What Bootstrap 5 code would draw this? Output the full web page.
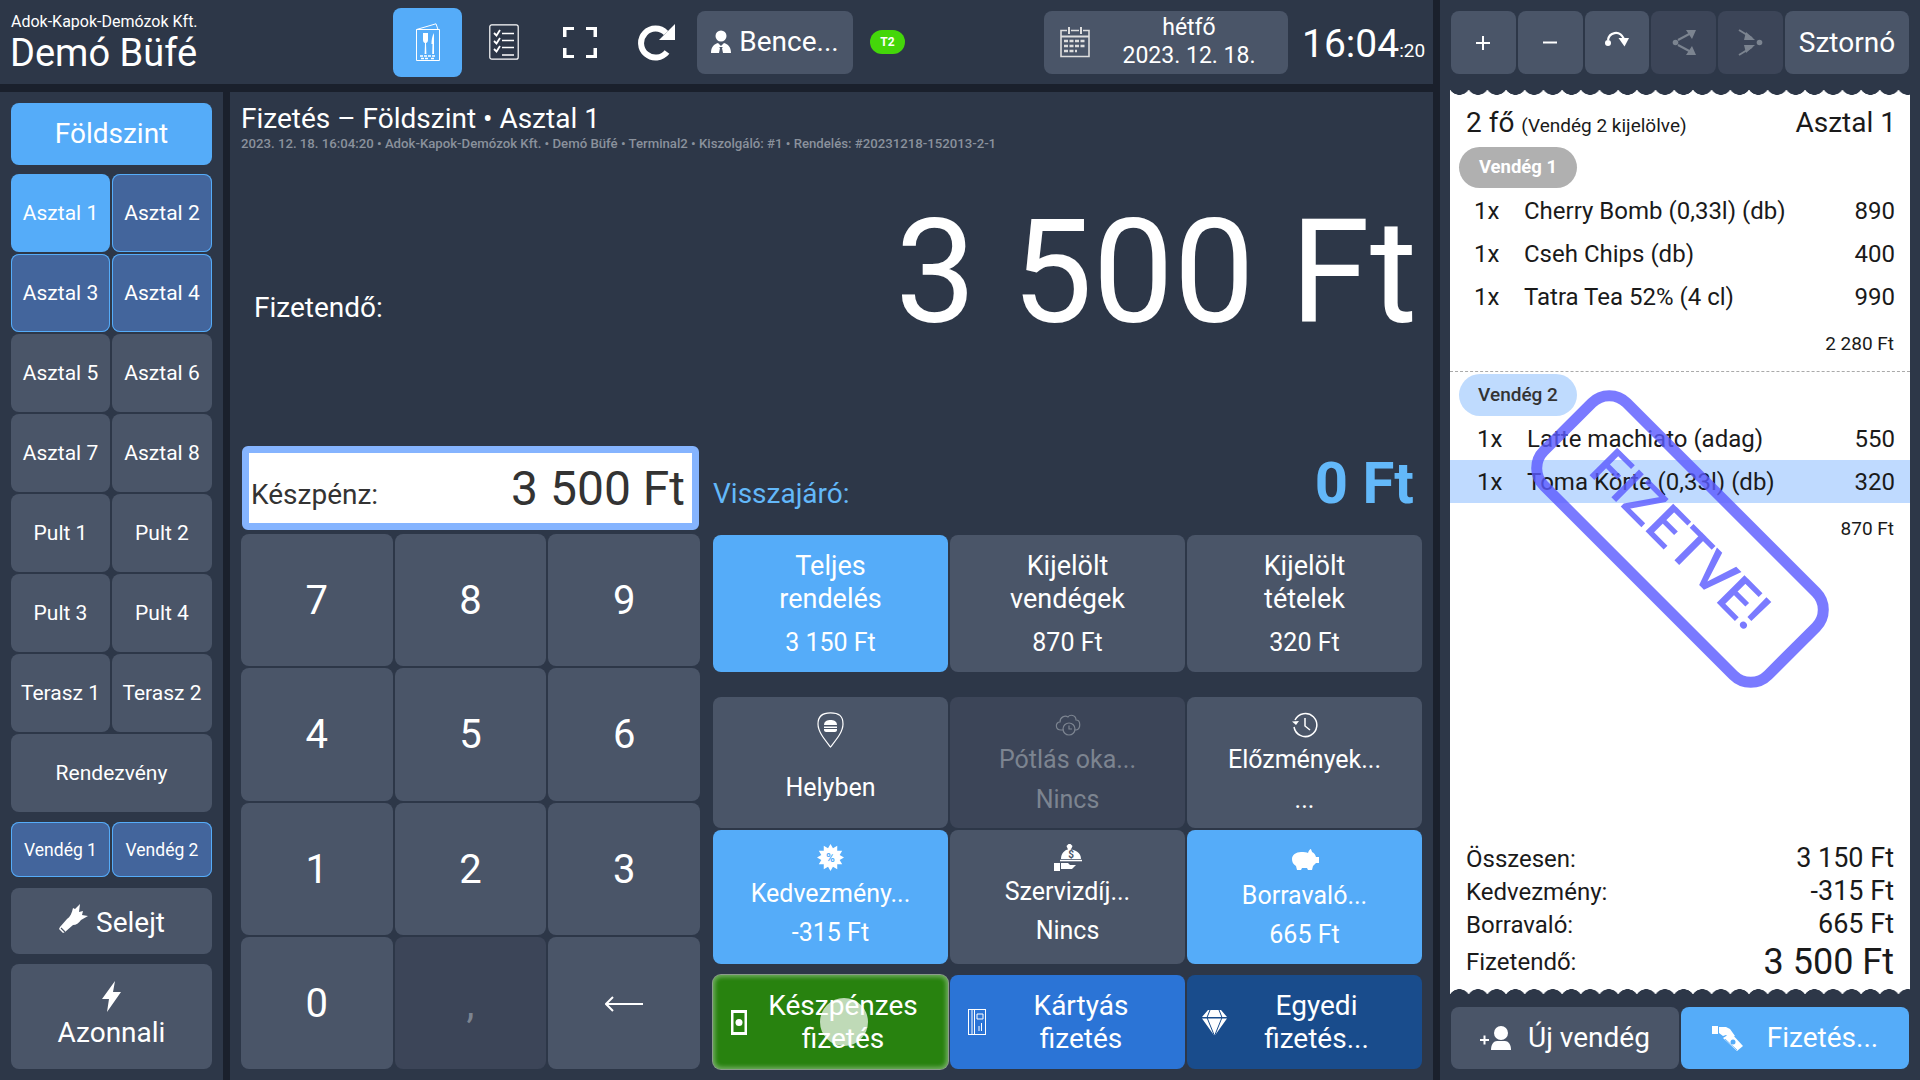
<!DOCTYPE html>
<html lang="hu">

<head>
    <meta charset="UTF-8">
    <meta name="viewport" content="width=device-width, initial-scale=1.0">
    <title>Demó Büfé - Fizetés</title>
    <link href="https://cdn.jsdelivr.net/npm/bootstrap@5.3.0/dist/css/bootstrap.min.css" rel="stylesheet">
    <style>
        body, html {
            margin: 0;
            height: 100%;
            overflow: hidden;
            background: #1a202c;
            font-family: Roboto, "Liberation Sans", sans-serif;
            color: #fff;
        }
        .app-wrap { width: 1920px; height: 1080px; }
        .left-area { width: 1433px; }
        .panel-bg { background: #2d3748; }

        /* buttons */
        .pos-btn {
            --bs-btn-bg: #4a5568;
            --bs-btn-color: #fff;
            --bs-btn-border-width: 0;
            --bs-btn-padding-x: 0;
            --bs-btn-padding-y: 0;
            --bs-btn-border-radius: 8px;
            --bs-btn-hover-bg: #4a5568;
            --bs-btn-hover-color: #fff;
            --bs-btn-disabled-bg: #3c4558;
            --bs-btn-disabled-color: #7c8490;
            --bs-btn-disabled-opacity: 1;
            line-height: 1.2;
        }
        .pos-blue { --bs-btn-bg: #55acf9; --bs-btn-hover-bg: #55acf9; }
        .pos-navy { --bs-btn-bg: #43659c; --bs-btn-hover-bg: #43659c; box-shadow: inset 0 0 0 1px #55acf9; }
        .pos-green { --bs-btn-bg: #28820f; --bs-btn-hover-bg: #28820f; box-shadow: 0 0 0 1px #8b9c8b, inset 0 0 4px 2px rgba(255,255,255,.35); }
        .pos-card { --bs-btn-bg: #2b74d6; --bs-btn-hover-bg: #2b74d6; }
        .pos-custom { --bs-btn-bg: #194c8c; --bs-btn-hover-bg: #194c8c; }

        /* header */
        .top-bar { height: 84px; }
        .top-bar > * { flex-shrink: 0; }
        .brand-box { width: 393px; padding-left: 10px; }
        .brand-sub { font-size: 16px; line-height: 18px; margin-top: 3px; padding-left: 1px; }
        .brand-name { font-size: 38px; line-height: 44px; }
        .menu-btn { width: 69px; height: 69px; }
        .icon-list { width: 83px; }
        .icon-full { width: 70px; }
        .icon-redo { width: 82px; }
        .user-btn { width: 156px; height: 63px; font-size: 28px; }
        .term-badge { width: 35px; height: 24px; margin-left: 17px; background: #44d60a; font-size: 12px; font-weight: 700; }
        .date-btn { width: 244px; height: 63px; margin-left: 139px; font-size: 23px; line-height: 28px; }
        .date-text { width: 200px; }
        .clock-box { margin-left: 14px; padding-top: 4px; font-size: 39px; line-height: 1; white-space: nowrap; }
        .clock-sec { font-size: 19px; }

        /* left sidebar */
        .sep-v { width: 7px; }
        .sep-h { height: 8px; }
        .side-bar { width: 223px; padding: 11px; }
        .level-btn { height: 62px; font-size: 28px; margin-bottom: 9px; }
        .table-grid { display: grid; grid-template-columns: 99px 100px; grid-auto-rows: 78px; gap: 2px; }
        .table-grid .btn { font-size: 21px; padding-top: 2px; }
        .span-two { grid-column: 1 / 3; }
        .guest-grid { display: grid; grid-template-columns: 99px 100px; gap: 2px; height: 55px; margin-top: 10px; }
        .guest-grid .btn { font-size: 17.500px; padding-top: 2px; }
        .waste-btn { height: 66px; margin-top: 11px; font-size: 28px; padding-top: 3px; }
        .instant-btn { height: 105px; margin-top: 10px; font-size: 28px; padding-bottom: 3px; }

        /* main */
        .pay-main { width: 1203px; padding: 0 11px 11px; }
        .pay-head { height: 354px; }
        .pay-title { font-size: 28px; line-height: 34px; padding-top: 10px; }
        .pay-meta { font-size: 13.200px; line-height: 16px; font-weight: 500; color: #8a919c; }
        .due-row { padding: 0 5px 0 13px; margin-top: 33px; }
        .due-label { font-size: 28px; padding-top: 102px; }
        .due-value { font-size: 144px; line-height: 176px; }
        .key-col { width: 459px; }
        .cash-box { height: 84px; margin: 0 1px 4px; border: 7px solid #85b4ff; border-radius: 6px; background: #fff; color: #333; padding: 0 7px 0 2px; }
        .cash-label { font-size: 28px; line-height: 1; padding-bottom: 14px; }
        .cash-value { font-size: 48px; line-height: 1; padding-bottom: 10px; }
        .key-grid { display: grid; grid-template-columns: repeat(3, 1fr); grid-template-rows: repeat(4, 1fr); gap: 2px; }
        .key-grid .btn { font-size: 40px; padding-top: 2px; }
        .key-grid svg { margin-bottom: 4px; }
        .act-col { width: 709px; margin-left: 13px; }
        .change-row { height: 89px; padding-right: 8px; }
        .change-label { font-size: 28px; color: #63b8f9; padding-top: 27px; }
        .change-value { font-size: 58px; font-weight: 700; color: #63b8f9; padding-top: 2px; line-height: 70px; }
        .act-grid { display: grid; grid-template-columns: repeat(3, 1fr); gap: 2px; }
        .act-grid .btn { font-size: 25px; }
        .scope-grid { grid-auto-rows: 137px; margin-bottom: 25px; }
        .scope-grid .btn { font-size: 27px; line-height: 33px; }
        .scope-val { margin-top: 12px; font-size: 25px; line-height: 30px; }
        .opt-one { height: 131px; margin-bottom: 2px; }
        .opt-two { height: 134px; margin-bottom: 11px; }
        .opt-btn { display: flex; flex-direction: column; align-items: center; padding-top: 15px; }
        .opt-icon { height: 36px; display: flex; align-items: flex-start; justify-content: center; }
        .opt-two .opt-btn { padding-top: 14px; }
        .opt-two .opt-icon { height: 28px; }
        .opt-two .icon-low svg { margin-top: 5px; }
        .opt-one .opt-text { margin-top: -3px; line-height: 30px; }
        .opt-one .opt-text.text-solo { margin-top: 25px; }
        .opt-one .opt-low { margin-top: 10px; line-height: 30px; }
        .opt-two .opt-text { margin-top: 7px; line-height: 30px; }
        .opt-two .opt-text.text-mid { margin-top: 5px; }
        .opt-two .opt-text.text-low { margin-top: 9px; }
        .opt-two .opt-low { margin-top: 9px; line-height: 30px; }
        .pay-grid { height: 94px; }
        .pay-grid .btn { display: flex; align-items: center; font-size: 28px; line-height: 33px; padding-left: 18px; padding-right: 18px; overflow: hidden; }
        .pay-text { flex-grow: 1; padding-left: 9px; }
        .pay-grid .pos-custom { padding-left: 15px; }
        .pos-custom .pay-text { padding-left: 2px; }
        .touch-dot { position: absolute; left: 107px; top: 23px; width: 48px; height: 48px; border-radius: 50%; background: rgba(255, 255, 255, .7); }

        /* right panel */
        .right-panel { width: 480px; padding: 11px 11px 11px; }
        .tool-bar { display: grid; grid-template-columns: repeat(5, 1fr) 124px; gap: 2px; height: 63px; }
        .tool-bar .btn { font-size: 28px; }
        .sheet { margin: 16px -1px 13px; background: #fff; color: #1a1a1a; height: 904px; }
        .wave-top, .wave-bottom { position: absolute; left: 0; right: 0; height: 5px; background-size: 18.7px 5px; background-repeat: repeat-x; background-position: left 0; }
        .wave-top { top: 0; background-image: radial-gradient(circle 11.2px at 50% -6.2px, #2d3748 96%, transparent 100%); }
        .wave-bottom { bottom: 0; background-image: radial-gradient(circle 11.2px at 50% 11.2px, #2d3748 96%, transparent 100%); }
        .sheet-head { height: 57px; padding: 12px 14px 0 16px; font-size: 28px; }
        .sheet-note { font-size: 19px; }
        .guest-pill { width: 118px; height: 41px; margin-left: 9px; border-radius: 21px; font-size: 19px; font-weight: 500; padding-top: 1px; }
        .pill-off { background: #b0b0b0; color: #fff; font-weight: 700; font-size: 18.500px; }
        .pill-on { background: #bfdbfe; color: #333; height: 42px; }
        .item-row { height: 43px; padding: 0 15px 0 24px; font-size: 24px; }
        .item-row.first-row { margin-top: 1px; }
        .item-row.shift-row { padding-left: 27px; }
        .item-qty { width: 50px; }
        .item-row.picked { background: #bfdaff; }
        .guest-sum { height: 53px; padding: 0 16px 1px 0; font-size: 19px; }
        .guest-one { height: 225px; border-bottom: 1px dashed #aaa; }
        .guest-gap { margin-top: 2px; }
        .sum-box { margin-top: auto; padding: 0 16px 12px; }
        .sum-row { height: 33px; font-size: 24px; }
        .sum-row b { font-weight: 400; font-size: 27px; }
        .sum-row.grand { height: 41px; }
        .sum-row.grand b { font-size: 36px; }
        .bottom-btns { display: grid; grid-template-columns: 1fr 1fr; gap: 2px; height: 62px; }
        .bottom-btns .btn { font-size: 28px; }
        .paid-stamp {
            position: absolute; left: 66px; top: 385px; width: 328px; height: 128px;
            border: 11px solid #5a5aff; border-radius: 30px;
            color: #5a5aff; opacity: .8;
            font-size: 55px; font-weight: 500;
            transform: rotate(45deg);
        }
    </style>
</head>

<body>
    <div class="app-wrap d-flex">
        <div class="left-area d-flex flex-column">
            <!-- fejlec -->
            <div class="top-bar panel-bg d-flex align-items-center">
                <div class="brand-box">
                    <div class="brand-sub">Adok-Kapok-Demózok Kft.</div>
                    <div class="brand-name">Demó Büfé</div>
                </div>
                <button class="btn pos-btn pos-blue menu-btn d-flex align-items-center justify-content-center">
                    <svg width="24" height="38" viewBox="0 0 24 38" fill="none" stroke="#fff" stroke-width="1">
                        <path d="M.5 6.500h23v31H.5zM.5 6.500 20 .8l2 5.700"/>
                        <path d="M7 10v7c0 2 1.200 3 2 3l-.4 11h1.800L10 20c.8 0 2-1 2-3v-7" fill="#fff" stroke="none"/>
                        <path d="M18 10c-2 3-2.500 7-2.500 11h1l-.3 10h1.800z" fill="#fff" stroke="none"/>
                        <path d="M4 33h16M5 35.500h8M15 35.500h4" stroke-width="1.500" stroke-dasharray="3 1"/>
                    </svg>
                </button>
                <div class="icon-list d-flex justify-content-center">
                    <svg width="30" height="36" viewBox="0 0 30 36" fill="none" stroke="#fff">
                        <rect x=".8" y=".8" width="28.400" height="34.400" rx="2" stroke-width="1.200"/>
                        <path d="M5 9l2.500 2.500L11 6M5 17l2.500 2.500L11 14M5 25l2.500 2.500L11 22" stroke-width="1.800"/>
                        <path d="M13 9.500h12M13 16.500h12M13 23.500h12M13 31h12" stroke-width="1.500"/>
                    </svg>
                </div>
                <div class="icon-full d-flex justify-content-center">
                    <svg width="34" height="31" viewBox="0 0 34 31" fill="#fff">
                        <path d="M0 0h11v3H3.500v7H0zM23 0h11v10h-3.500V3H23zM0 21h3.500v7H11v3H0zM30.500 21H34v10H23v-3h7.500z"/>
                    </svg>
                </div>
                <div class="icon-redo d-flex justify-content-center">
                    <svg width="38" height="38" viewBox="0 0 38 38" fill="none">
                        <path d="M30 29a14.500 14.500 0 1 1-1-19" stroke="#fff" stroke-width="6"/>
                        <path d="M38 1v16H22z" fill="#fff"/>
                    </svg>
                </div>
                <button class="btn pos-btn user-btn d-flex align-items-center justify-content-center gap-2">
                    <svg width="20" height="24" viewBox="0 0 20 24" fill="#fff">
                        <circle cx="10" cy="6" r="5.500"/>
                        <path d="M0 23c0-6 3-9 7-10l3 3 3-3c4 1 7 4 7 10H12l-1-5 1-1H8l1 1-1 5z"/>
                    </svg>
                    <span>Bence...</span>
                </button>
                <span class="term-badge rounded-pill d-flex align-items-center justify-content-center">T2</span>
                <button class="btn pos-btn date-btn d-flex align-items-center">
                    <svg class="ms-3 flex-shrink-0" width="30" height="32" viewBox="0 0 30 32" fill="none" stroke="#ddd">
                        <path d="M7 4.500H1v26h28v-26h-6M11 4.500h8" stroke-width="1.600"/>
                        <path d="M9 1v7M21 1v7" stroke-width="2"/>
                        <path d="M1 10.500h28" stroke-width="2"/>
                        <path d="M4 15h22M4 20h22M4 25h13" stroke-width="2.500" stroke-dasharray="4 1.500"/>
                    </svg>
                    <span class="date-text text-center">hétfő<br>2023. 12. 18.</span>
                </button>
                <div class="clock-box">16:04<span class="clock-sec">:20</span></div>
            </div>
            <div class="sep-h"></div>

            <div class="d-flex flex-grow-1">
                <!-- asztalok -->
                <div class="side-bar panel-bg d-flex flex-column">
                    <button class="btn pos-btn pos-blue level-btn">Földszint</button>
                    <div class="table-grid" id="tableGrid"></div>
                    <div class="guest-grid">
                        <button class="btn pos-btn pos-navy">Vendég 1</button>
                        <button class="btn pos-btn pos-navy">Vendég 2</button>
                    </div>
                    <button class="btn pos-btn waste-btn d-flex align-items-center justify-content-center gap-2">
                        <svg class="mb-2" width="30" height="30" viewBox="0 0 30 30" fill="#fff">
                            <path d="M1 25l4 4 2-1 8-7c3 0 6-2 8-5l7-4-6-1 1-4-4 1 1-8-5 5-2-1c-1 5-3 9-6 11l-7 8z"/>
                            <path d="M3 24l4 4" stroke="#4a5568" stroke-width="1.200"/>
                        </svg>
                        <span>Selejt</span>
                    </button>
                    <button class="btn pos-btn instant-btn d-flex flex-column align-items-center justify-content-center">
                        <svg width="19" height="31" viewBox="0 0 19 31" fill="#fff">
                            <path d="M13 0 0 18h7L5 31l14-20h-8z"/>
                        </svg>
                        <span class="mt-1">Azonnali</span>
                    </button>
                </div>
                <div class="sep-v"></div>

                <!-- fizetes -->
                <div class="pay-main panel-bg d-flex flex-column">
                    <div class="pay-head">
                        <div class="pay-title">Fizetés – Földszint • Asztal 1</div>
                        <div class="pay-meta">2023. 12. 18. 16:04:20 • Adok-Kapok-Demózok Kft. • Demó Büfé • Terminal2 • Kiszolgáló: #1 • Rendelés: #20231218-152013-2-1</div>
                        <div class="due-row d-flex justify-content-between">
                            <div class="due-label">Fizetendő:</div>
                            <div class="due-value">3 500 Ft</div>
                        </div>
                    </div>
                    <div class="d-flex flex-grow-1">
                        <div class="key-col d-flex flex-column">
                            <div class="cash-box d-flex justify-content-between align-items-end">
                                <span class="cash-label">Készpénz:</span>
                                <span class="cash-value">3 500 Ft</span>
                            </div>
                            <div class="key-grid flex-grow-1" id="keyGrid"></div>
                        </div>
                        <div class="act-col">
                            <div class="change-row d-flex justify-content-between">
                                <span class="change-label">Visszajáró:</span>
                                <span class="change-value">0 Ft</span>
                            </div>
                            <div class="act-grid scope-grid">
                                <button class="btn pos-btn pos-blue">Teljes<br>rendelés<div class="scope-val">3 150 Ft</div></button>
                                <button class="btn pos-btn">Kijelölt<br>vendégek<div class="scope-val">870 Ft</div></button>
                                <button class="btn pos-btn">Kijelölt<br>tételek<div class="scope-val">320 Ft</div></button>
                            </div>
                            <div class="act-grid opt-one">
                                <button class="btn pos-btn opt-btn">
                                    <span class="opt-icon">
                                        <svg width="27" height="36" viewBox="0 0 27 36" fill="none" stroke="#fff" stroke-width="1.200">
                                            <path d="M13.500 .8C5 .8 1 4 1 12c0 8 7 16 12.500 23C19 28 26 20 26 12 26 4 22 .8 13.500 .8z"/>
                                            <path d="M7 13c0-4 3.500-5 6.500-5s6.500 1 6.500 5zM7 14.500h13v1.500H7zM7 17h13v1c0 1-1 2-2 2H9c-1 0-2-1-2-2z" fill="#fff" stroke="none"/>
                                        </svg>
                                    </span>
                                    <span class="opt-text text-solo">Helyben</span>
                                </button>
                                <button class="btn pos-btn opt-btn" disabled>
                                    <span class="opt-icon">
                                        <svg width="26" height="24" viewBox="0 0 26 24" fill="none" stroke="#7c8490" stroke-width="1.200">
                                            <path d="M9 18H6c-6 0-6-8-1-8 0-5 5-7 8-5 2-3 8-2 8 3 5 0 5 9 0 10h-2"/>
                                            <circle cx="14" cy="17" r="6"/>
                                            <path d="M14 13.500V17h3"/>
                                        </svg>
                                    </span>
                                    <span class="opt-text">Pótlás oka...</span>
                                    <span class="opt-low">Nincs</span>
                                </button>
                                <button class="btn pos-btn opt-btn">
                                    <span class="opt-icon">
                                        <svg width="26" height="26" viewBox="0 0 26 26" fill="none" stroke="#fff" stroke-width="1.500">
                                            <path d="M3 8a11.500 11.500 0 1 1-1 7"/>
                                            <path d="M0 9.500l4 3.500 3-4z" fill="#fff" stroke="none"/>
                                            <path d="M13 6v8l5 4"/>
                                        </svg>
                                    </span>
                                    <span class="opt-text">Előzmények...</span>
                                    <span class="opt-low">...</span>
                                </button>
                            </div>
                            <div class="act-grid opt-two">
                                <button class="btn pos-btn pos-blue opt-btn">
                                    <span class="opt-icon">
                                        <svg width="27" height="27" viewBox="0 0 27 27">
                                            <polygon fill="#fff" points="13.5,0 15.96,4.32 20.25,1.81 20.22,6.78 25.19,6.75 22.68,11.04 27,13.5 22.68,15.96 25.19,20.25 20.22,20.22 20.25,25.19 15.96,22.68 13.5,27 11.04,22.68 6.75,25.19 6.78,20.22 1.81,20.25 4.32,15.96 0,13.5 4.32,11.04 1.81,6.75 6.78,6.78 6.75,1.81 11.04,4.32"/>
                                            <text x="13.500" y="18" text-anchor="middle" font-size="12" font-family="Roboto" font-weight="700" fill="#55acf9">%</text>
                                        </svg>
                                    </span>
                                    <span class="opt-text">Kedvezmény...</span>
                                    <span class="opt-low">-315 Ft</span>
                                </button>
                                <button class="btn pos-btn opt-btn">
                                    <span class="opt-icon">
                                        <svg width="28" height="27" viewBox="0 0 28 27" fill="#fff">
                                            <path d="M7 15C7 9 11 6 14 5.500L12.500 2l2-2h2l2 2L17 5.500c4 .5 10 3 10 9.500z"/>
                                            <path d="M6 15.800h22v1.500H6z"/>
                                            <path d="M0 19h6v8H0zM7 19h7l2 2h6l-4 4H7z"/>
                                            <text x="17" y="14" text-anchor="middle" font-size="10" font-family="Roboto" font-weight="700" fill="#4a5568">$</text>
                                        </svg>
                                    </span>
                                    <span class="opt-text text-mid">Szervizdíj...</span>
                                    <span class="opt-low">Nincs</span>
                                </button>
                                <button class="btn pos-btn pos-blue opt-btn">
                                    <span class="opt-icon icon-low">
                                        <svg width="28" height="21" viewBox="0 0 28 21" fill="#fff">
                                            <path d="M20 0c0 1 1 2 1 3 2 1 3 2 4 5h3v6h-3c-1 1-2 2-3 3l-1 4h-4l-1-2h-5l-1 2H6l-1-4c-3-2-4-4-4-7 0-4 4-7 9-7 3 0 6 0 7 1 .5-2 2-4 3-4z"/>
                                        </svg>
                                    </span>
                                    <span class="opt-text text-low">Borravaló...</span>
                                    <span class="opt-low">665 Ft</span>
                                </button>
                            </div>
                            <div class="act-grid pay-grid">
                                <button class="btn pos-btn pos-green position-relative">
                                    <svg class="flex-shrink-0" width="16" height="25" viewBox="0 0 16 25">
                                        <path d="M0 0h16v25H0z" fill="#fff"/>
                                        <path d="M2.500 3h11v19h-11z" fill="#28820f"/>
                                        <circle cx="8" cy="12.500" r="3.500" fill="#fff"/>
                                    </svg>
                                    <span class="pay-text">Készpénzes fizetés</span>
                                    <span class="touch-dot"></span>
                                </button>
                                <button class="btn pos-btn pos-card">
                                    <svg class="flex-shrink-0" width="18" height="26" viewBox="0 0 18 26" fill="none" stroke="#fff">
                                        <rect x=".5" y=".5" width="17" height="25"/>
                                        <path d="M4 .5v25M6.500 .5v25M9 5h6v5H9zM11 22v-5M13.500 22v-8"/>
                                    </svg>
                                    <span class="pay-text">Kártyás fizetés</span>
                                </button>
                                <button class="btn pos-btn pos-custom">
                                    <svg class="flex-shrink-0" width="25" height="27" viewBox="0 0 25 27" fill="#fff">
                                        <path d="M6 1h13l6 7H0zM0 9.500h25L12.500 27z"/>
                                        <path d="M8 1 5 8.500 12.500 27 20 8.500 17 1M5 8.500h15" fill="none" stroke="#194c8c"/>
                                    </svg>
                                    <span class="pay-text">Egyedi fizetés...</span>
                                </button>
                            </div>
                        </div>
                    </div>
                </div>
            </div>
        </div>
        <div class="sep-v"></div>

        <!-- blokk -->
        <div class="right-panel panel-bg d-flex flex-column">
            <div class="tool-bar">
                <button class="btn pos-btn d-flex align-items-center justify-content-center">
                    <svg width="16" height="16" viewBox="0 0 16 16" stroke="#fff" stroke-width="2"><path d="M8 1v14M1 8h14"/></svg>
                </button>
                <button class="btn pos-btn d-flex align-items-center justify-content-center">
                    <svg width="16" height="3" viewBox="0 0 16 3" stroke="#fff" stroke-width="2"><path d="M1 1.500h14"/></svg>
                </button>
                <button class="btn pos-btn d-flex align-items-center justify-content-center">
                    <svg class="mb-2" width="24" height="16" viewBox="0 0 24 16" fill="none">
                        <circle cx="3" cy="12" r="3" fill="#fff"/>
                        <path d="M3 9C4 2 14-2 19 8" stroke="#fff" stroke-width="2.200"/>
                        <path d="M13.500 7H24l-4.500 8.500z" fill="#fff"/>
                    </svg>
                </button>
                <button class="btn pos-btn d-flex align-items-center justify-content-center" disabled>
                    <svg width="24" height="27" viewBox="0 0 24 27" fill="none" stroke="#7c8490" stroke-width="2">
                        <circle cx="3.500" cy="13.500" r="2.800" fill="#7c8490" stroke="none"/>
                        <path d="M6 11 21 3M6 16l15 8"/>
                        <path d="M14 1h10l-4 9zM14 26h10l-4-9z" fill="#7c8490" stroke="none"/>
                    </svg>
                </button>
                <button class="btn pos-btn d-flex align-items-center justify-content-center" disabled>
                    <svg width="25" height="27" viewBox="0 0 25 27" fill="none" stroke="#7c8490" stroke-width="2">
                        <circle cx="21.500" cy="13.500" r="2.800" fill="#7c8490" stroke="none"/>
                        <path d="M1 1 14 9M1 26l13-8"/>
                        <path d="M8 3l9 8H6zM8 24l9-8H6z" fill="#7c8490" stroke="none"/>
                    </svg>
                </button>
                <button class="btn pos-btn">Sztornó</button>
            </div>

            <div class="sheet position-relative d-flex flex-column">
                <div class="wave-top"></div>
                <div class="sheet-head d-flex justify-content-between">
                    <div>2 fő <span class="sheet-note">(Vendég 2 kijelölve)</span></div>
                    <div>Asztal 1</div>
                </div>
                <div class="guest-one">
                    <div class="guest-pill pill-off d-flex align-items-center justify-content-center">Vendég 1</div>
                    <div class="item-row first-row d-flex align-items-center"><span class="item-qty">1x</span><span class="flex-grow-1">Cherry Bomb (0,33l) (db)</span><span>890</span></div>
                    <div class="item-row d-flex align-items-center"><span class="item-qty">1x</span><span class="flex-grow-1">Cseh Chips (db)</span><span>400</span></div>
                    <div class="item-row d-flex align-items-center"><span class="item-qty">1x</span><span class="flex-grow-1">Tatra Tea 52% (4 cl)</span><span>990</span></div>
                    <div class="guest-sum d-flex align-items-center justify-content-end">2 280 Ft</div>
                </div>
                <div class="guest-gap">
                    <div class="guest-pill pill-on d-flex align-items-center justify-content-center">Vendég 2</div>
                    <div class="item-row shift-row first-row d-flex align-items-center"><span class="item-qty">1x</span><span class="flex-grow-1">Latte machiato (adag)</span><span>550</span></div>
                    <div class="item-row shift-row picked d-flex align-items-center"><span class="item-qty">1x</span><span class="flex-grow-1">Toma Körte (0,33l) (db)</span><span>320</span></div>
                    <div class="guest-sum d-flex align-items-center justify-content-end">870 Ft</div>
                </div>
                <div class="sum-box">
                    <div class="sum-row d-flex justify-content-between align-items-center"><span>Összesen:</span><b>3 150 Ft</b></div>
                    <div class="sum-row d-flex justify-content-between align-items-center"><span>Kedvezmény:</span><b>-315 Ft</b></div>
                    <div class="sum-row d-flex justify-content-between align-items-center"><span>Borravaló:</span><b>665 Ft</b></div>
                    <div class="sum-row grand d-flex justify-content-between align-items-center"><span>Fizetendő:</span><b>3 500 Ft</b></div>
                </div>
                <div class="wave-bottom"></div>
                <div class="paid-stamp d-flex align-items-center justify-content-center">FIZETVE!</div>
            </div>

            <div class="bottom-btns">
                <button class="btn pos-btn d-flex align-items-center justify-content-center gap-3">
                    <svg width="32" height="24" viewBox="0 0 32 24" fill="#fff">
                        <path d="M0 13h9v2H0zM3.500 9.500h2v9h-2z"/>
                        <circle cx="21" cy="7" r="7"/>
                        <path d="M11 24c0-6 3-9 6-9h8c3 0 6 3 6 9z"/>
                    </svg>
                    <span>Új vendég</span>
                </button>
                <button class="btn pos-btn pos-blue d-flex align-items-center justify-content-center gap-4">
                    <svg width="31" height="25" viewBox="0 0 31 25" fill="#fff">
                        <path d="M0 0h6v8H0zM7 1h7l4 2 5 7-5 2-4-3-3 1-4-3z"/>
                        <path d="M11 12l8-5 12 13-6 5z"/>
                        <circle cx="21" cy="16" r="2.500" fill="#55acf9"/>
                        <path d="M13 13l12 11" stroke="#55acf9" stroke-width=".8"/>
                    </svg>
                    <span>Fizetés...</span>
                </button>
            </div>
        </div>
    </div>

    <script src="https://cdn.jsdelivr.net/npm/bootstrap@5.3.0/dist/js/bootstrap.bundle.min.js"></script>
    <script>
        // asztal gombok
        const tables = [
            ['Asztal 1', 'pos-blue'], ['Asztal 2', 'pos-navy'], ['Asztal 3', 'pos-navy'], ['Asztal 4', 'pos-navy'],
            ['Asztal 5', ''], ['Asztal 6', ''], ['Asztal 7', ''], ['Asztal 8', ''],
            ['Pult 1', ''], ['Pult 2', ''], ['Pult 3', ''], ['Pult 4', ''],
            ['Terasz 1', ''], ['Terasz 2', ''], ['Rendezvény', 'span-two']
        ];
        document.getElementById('tableGrid').innerHTML = tables
            .map(t => `<button class="btn pos-btn ${t[1]}">${t[0]}</button>`).join('');

        // szamok
        const backArrow = '<svg width="38" height="16" viewBox="0 0 38 16" fill="none" stroke="#fff" stroke-width="2"><path d="M1 8h37M8 1 1 8l7 7"/></svg>';
        const keys = ['7', '8', '9', '4', '5', '6', '1', '2', '3', '0', ',', backArrow];
        document.getElementById('keyGrid').innerHTML = keys
            .map(k => `<button class="btn pos-btn" ${k === ',' ? 'disabled' : ''}>${k}</button>`).join('');
    </script>
</body>

</html>
